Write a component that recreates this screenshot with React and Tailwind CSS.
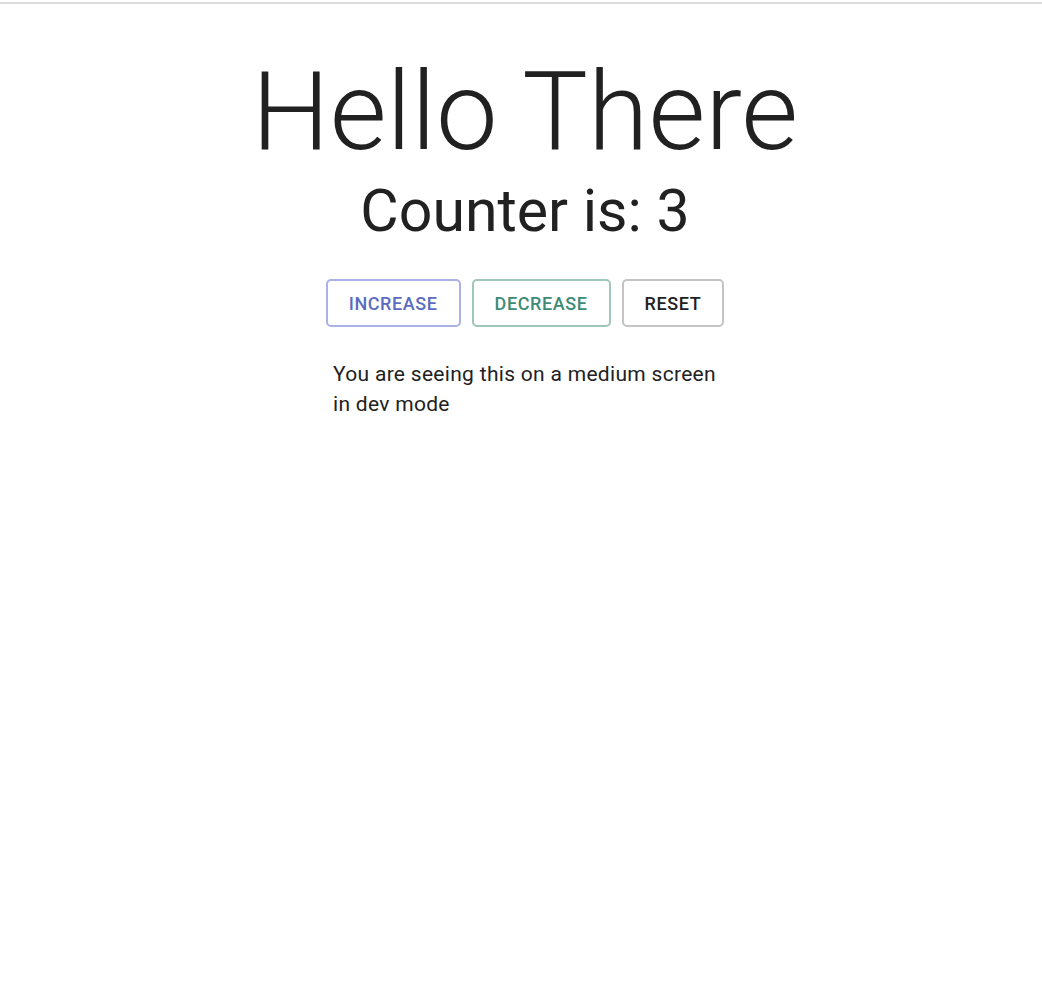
export default function App() {
    const buttons = [
        { label: 'INCREASE', className: 'text-[#5c6bc0] border-[#a9b1e6]' },
        { label: 'DECREASE', className: 'text-[#3d8b74] border-[#9fc6bb]' },
        { label: 'RESET', className: 'text-[#212121] border-[#c4c4c4]' },
    ];

    return (
        <div className="min-h-screen bg-white font-['Roboto',sans-serif] text-[#212121]">
            {/* top rule */}
            <div className="pt-[2px]">
                <div className="h-[2px] bg-[#dcdbe0]"></div>
            </div>

            <div className="flex flex-col items-center pl-[8px]">
                <h1 className="mt-[53px] text-[110px] font-light leading-none">Hello There</h1>
                <h2 className="mt-[14px] text-[59px] font-normal leading-none">Counter is: 3</h2>

                <div className="mt-[39px] flex gap-[11px]">
                    {buttons.map((b) => (
                        <button
                            key={b.label}
                            className={`h-[48px] px-[21px] rounded-[5px] border-2 bg-white text-[18px] font-medium tracking-[0.6px] ${b.className}`}
                        >
                            {b.label}
                        </button>
                    ))}
                </div>

                <p className="mt-[32px] w-[396px] px-[6px] text-[21px] tracking-[0.3px] leading-[30px]">
                    You are seeing this on a medium screen in dev mode
                </p>
            </div>
        </div>
    );
}
